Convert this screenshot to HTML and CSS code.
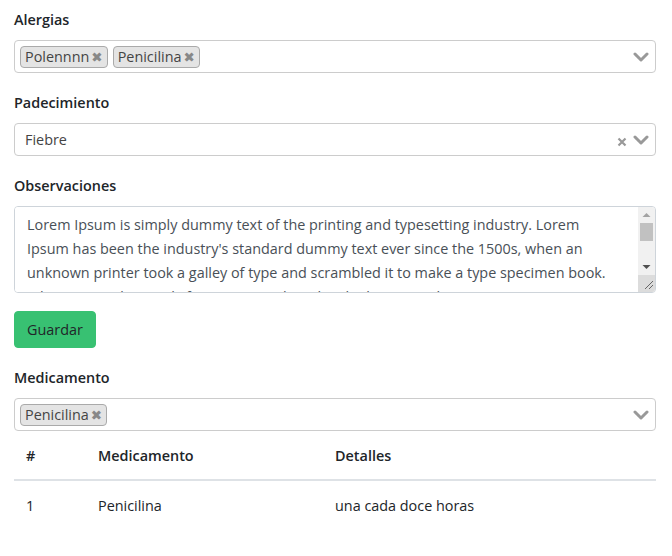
FILE: index.html
```html
<!DOCTYPE html>
<html lang="es">
<head>
<meta charset="utf-8">
<link rel="stylesheet" href="styles.css">
</head>
<body>
<div class="page">
  <div class="group">
    <label class="label">Alergias</label>
    <div class="select">
      <div class="choices">
        <span class="tag">Polennnn<span class="tag-x">&#x2716;</span></span>
        <span class="tag">Penicilina<span class="tag-x">&#x2716;</span></span>
      </div>
      <svg class="chev" viewBox="0 0 16 10" width="16" height="10"><path d="M2 2 L8 8 L14 2" fill="none" stroke="#999" stroke-width="3" stroke-linecap="round" stroke-linejoin="round"/></svg>
    </div>
  </div>
  <div class="group">
    <label class="label">Padecimiento</label>
    <div class="select">
      <div class="single">Fiebre</div>
      <svg class="clear" viewBox="0 0 10 10" width="10" height="10"><path d="M1.5 1.5 L8.5 8.5 M8.5 1.5 L1.5 8.5" fill="none" stroke="#999" stroke-width="2.2"/></svg>
      <svg class="chev" viewBox="0 0 16 10" width="16" height="10"><path d="M2 2 L8 8 L14 2" fill="none" stroke="#999" stroke-width="3" stroke-linecap="round" stroke-linejoin="round"/></svg>
    </div>
  </div>
  <div class="group">
    <label class="label">Observaciones</label>
    <div class="area-wrap">
      <textarea class="area" rows="3">Lorem Ipsum is simply dummy text of the printing and typesetting industry. Lorem Ipsum has been the industry's standard dummy text ever since the 1500s, when an unknown printer took a galley of type and scrambled it to make a type specimen book. It has survived not only five centuries, but also the leap into electronic typesetting, remaining essentially unchanged.</textarea>
      <div class="sbar">
        <div class="sb-btn"><svg width="17" height="16" viewBox="0 0 17 16"><path d="M4.5 10 L8.5 6 L12.5 10 Z" fill="#a3a3a3"/></svg></div>
        <div class="sb-track"><div class="sb-thumb"></div></div>
        <div class="sb-btn"><svg width="17" height="16" viewBox="0 0 17 16"><path d="M4.5 6 L8.5 10 L12.5 6 Z" fill="#505050"/></svg></div>
        <div class="sb-resizer"><svg width="17" height="16" viewBox="0 0 17 16"><path d="M15 6 L7 14 M15 10 L11 14" stroke="#666" stroke-width="1"/></svg></div>
      </div>
    </div>
  </div>
  <div class="group">
    <button class="btn">Guardar</button>
  </div>
  <div class="group last">
    <label class="label">Medicamento</label>
    <div class="select">
      <div class="choices">
        <span class="tag">Penicilina<span class="tag-x">&#x2716;</span></span>
      </div>
      <svg class="chev" viewBox="0 0 16 10" width="16" height="10"><path d="M2 2 L8 8 L14 2" fill="none" stroke="#999" stroke-width="3" stroke-linecap="round" stroke-linejoin="round"/></svg>
    </div>
  </div>
  <table class="table">
    <thead>
      <tr><th class="c1">#</th><th class="c2">Medicamento</th><th>Detalles</th></tr>
    </thead>
    <tbody>
      <tr><td>1</td><td>Penicilina</td><td>una cada doce horas</td></tr>
    </tbody>
  </table>
</div>
</body>
</html>
```
FILE: styles.css
```css
html, body {
  margin: 0;
  padding: 0;
  background: #fff;
}
body {
  font-family: "Open Sans", "Lato", sans-serif;
  font-size: 14.4px;
  color: #212529;
}
.page {
  width: 642px;
  padding: 8px 16px 0 14px;
}
.group {
  margin-bottom: 18px;
}
.group.last {
  margin-bottom: 0;
}
.label {
  display: block;
  font-weight: 600;
  font-size: 14.4px;
  line-height: 24px;
  margin-bottom: 8px;
  color: #212529;
}
.select {
  box-sizing: border-box;
  height: 33px;
  border: 1px solid #ccc;
  border-radius: 4px;
  display: flex;
  align-items: center;
  padding: 0 6px 0 5px;
  background: #fff;
}
.choices {
  flex: 1;
  display: flex;
  gap: 5px;
  align-items: center;
}
.tag {
  box-sizing: border-box;
  height: 22px;
  display: inline-flex;
  align-items: center;
  background: #e4e4e4;
  border: 1px solid #aaa;
  border-radius: 4px;
  padding: 0 4px 0 4px;
  color: #444;
  line-height: 20px;
}
.tag-x {
  color: #888;
  font-size: 13.5px;
  margin-left: 2px;
  font-family: "DejaVu Sans", sans-serif;
}
.single {
  flex: 1;
  padding-left: 5px;
  color: #444;
}
.clear {
  margin-right: 6px;
  margin-top: 4px;
}
.chev {
  display: block;
}
.area-wrap {
  display: flex;
  box-sizing: border-box;
  height: 87px;
  border: 1px solid #ced4da;
  border-radius: 4px;
  overflow: hidden;
}
.area {
  flex: 1;
  display: block;
  box-sizing: border-box;
  height: 85px;
  margin: 0;
  padding: 6px 24px 6px 12px;
  border: none;
  outline: none;
  font-family: inherit;
  font-size: 14.4px;
  line-height: 24px;
  color: #495057;
  overflow: hidden;
  resize: none;
}
.sbar {
  width: 17px;
  display: flex;
  flex-direction: column;
  background: #f1f1f1;
}
.sb-btn {
  height: 16px;
}
.sb-btn svg, .sb-resizer svg {
  display: block;
}
.sb-track {
  flex: 1;
}
.sb-thumb {
  height: 18px;
  margin: 0 2px;
  background: #c1c1c1;
}
.sb-resizer {
  height: 17px;
  background: #dcdcdc;
}
.btn {
  font-family: inherit;
  font-size: 14.4px;
  line-height: 23px;
  padding: 6px 12px;
  border: 1px solid #38c172;
  background: #38c172;
  color: #212529;
  border-radius: 4px;
}
.table {
  width: 642px;
  border-collapse: collapse;
}
.table th, .table td {
  text-align: left;
  padding: 13px 12px 12px;
  line-height: 23px;
}
.table th {
  font-weight: 600;
  font-size: 14.4px;
  border-bottom: 2px solid #dee2e6;
}
.table td {
  color: #212529;
}
.c1 { width: 48px; }
.c2 { width: 213px; }
```
